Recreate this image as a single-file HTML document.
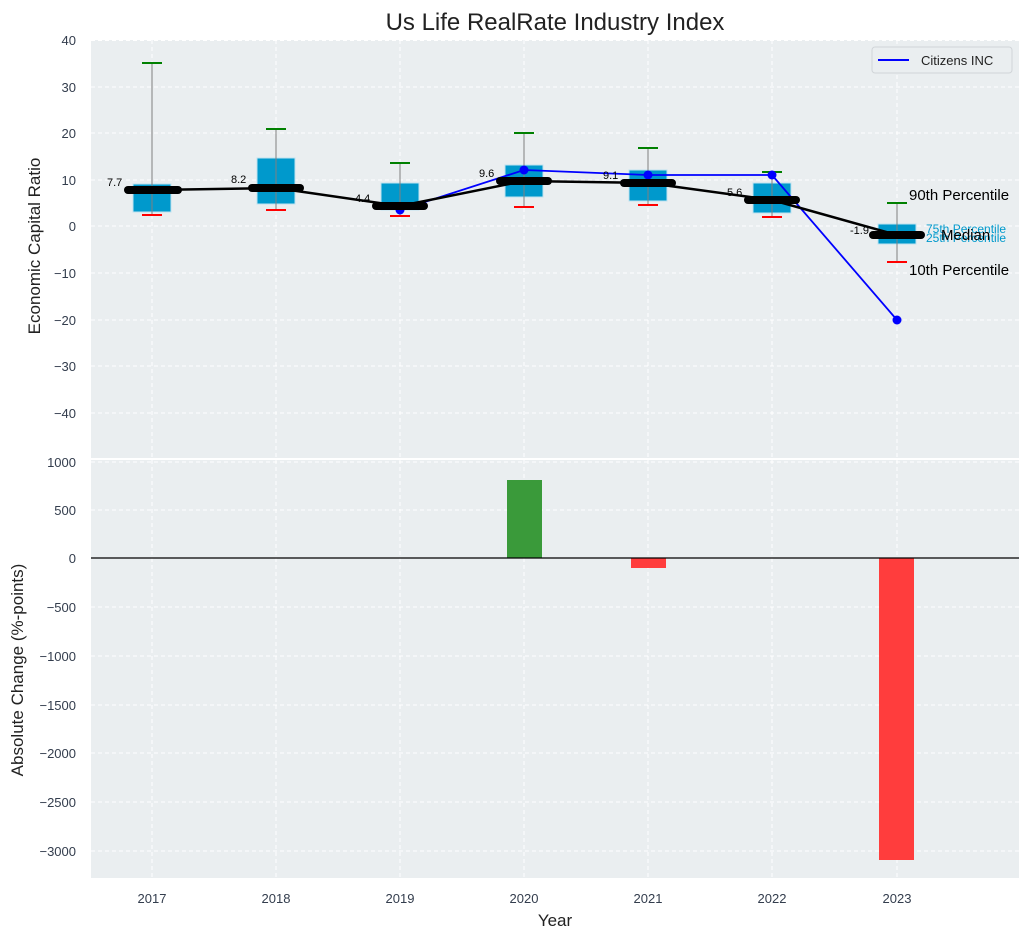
<!DOCTYPE html>
<html><head><meta charset="utf-8"><style>
html,body{margin:0;padding:0;background:#fff;}
svg{display:block;font-family:"Liberation Sans","DejaVu Sans",sans-serif;}
</style></head><body>
<svg width="1030" height="940" viewBox="0 0 1030 940" xmlns="http://www.w3.org/2000/svg">
<rect width="1030" height="940" fill="#fff"/>
<!-- top axes -->
<rect x="91" y="40" width="928" height="418" fill="#eaeef0"/>
<!-- bottom axes -->
<rect x="91" y="460" width="928" height="418" fill="#eaeef0"/>
<g stroke="#fff" stroke-width="1" stroke-dasharray="4,3">
 <line x1="91" x2="1019" y1="40.5" y2="40.5"/><line x1="91" x2="1019" y1="87" y2="87"/>
 <line x1="91" x2="1019" y1="133" y2="133"/><line x1="91" x2="1019" y1="180" y2="180"/>
 <line x1="91" x2="1019" y1="226" y2="226"/><line x1="91" x2="1019" y1="273" y2="273"/>
 <line x1="91" x2="1019" y1="320" y2="320"/><line x1="91" x2="1019" y1="366" y2="366"/>
 <line x1="91" x2="1019" y1="413" y2="413"/>
 <line x1="91" x2="1019" y1="462" y2="462"/><line x1="91" x2="1019" y1="510" y2="510"/>
 <line x1="91" x2="1019" y1="607" y2="607"/><line x1="91" x2="1019" y1="656" y2="656"/>
 <line x1="91" x2="1019" y1="705" y2="705"/><line x1="91" x2="1019" y1="753" y2="753"/>
 <line x1="91" x2="1019" y1="802" y2="802"/><line x1="91" x2="1019" y1="851" y2="851"/>
 <g>
 <line x1="152" x2="152" y1="40" y2="878"/><line x1="276" x2="276" y1="40" y2="878"/>
 <line x1="400" x2="400" y1="40" y2="878"/><line x1="524" x2="524" y1="40" y2="878"/>
 <line x1="648" x2="648" y1="40" y2="878"/><line x1="772" x2="772" y1="40" y2="878"/>
 <line x1="897" x2="897" y1="40" y2="878"/>
 </g>
</g>
<line x1="91" x2="1019" y1="459" y2="459" stroke="#fff" stroke-width="2"/>
<!-- boxes -->
<g fill="#0099cc" stroke="#bfe3f0" stroke-width="1">
 <rect x="133" y="184" width="38" height="28"/>
 <rect x="257" y="158" width="38" height="46"/>
 <rect x="381" y="183" width="38" height="27"/>
 <rect x="505" y="165" width="38" height="32"/>
 <rect x="629" y="170" width="38" height="31"/>
 <rect x="753" y="183" width="38" height="30"/>
 <rect x="878" y="224" width="38" height="20"/>
</g>
<g stroke="#808080" stroke-width="1">
 <line x1="152" x2="152" y1="63" y2="215"/><line x1="276" x2="276" y1="129" y2="210"/>
 <line x1="400" x2="400" y1="163" y2="216"/><line x1="524" x2="524" y1="133" y2="207"/>
 <line x1="648" x2="648" y1="148" y2="205"/><line x1="772" x2="772" y1="172" y2="217"/>
 <line x1="897" x2="897" y1="203" y2="262"/>
</g>
<g stroke="green" stroke-width="2">
 <line x1="142" x2="162" y1="63" y2="63"/><line x1="266" x2="286" y1="129" y2="129"/>
 <line x1="390" x2="410" y1="163" y2="163"/><line x1="514" x2="534" y1="133" y2="133"/>
 <line x1="638" x2="658" y1="148" y2="148"/><line x1="762" x2="782" y1="172" y2="172"/>
 <line x1="887" x2="907" y1="203" y2="203"/>
</g>
<g stroke="red" stroke-width="2">
 <line x1="142" x2="162" y1="215" y2="215"/><line x1="266" x2="286" y1="210" y2="210"/>
 <line x1="390" x2="410" y1="216" y2="216"/><line x1="514" x2="534" y1="207" y2="207"/>
 <line x1="638" x2="658" y1="205" y2="205"/><line x1="762" x2="782" y1="217" y2="217"/>
 <line x1="887" x2="907" y1="262" y2="262"/>
</g>
<!-- blue line -->
<polyline points="400,210 524,170 648,175 772,175 897,320" fill="none" stroke="#0000ff" stroke-width="1.8"/>
<g fill="#0000ff"><circle cx="400" cy="210" r="4.5"/><circle cx="524" cy="170" r="4.5"/><circle cx="648" cy="175" r="4.5"/><circle cx="772" cy="175" r="4.5"/><circle cx="897" cy="320" r="4.5"/></g>
<!-- median line -->
<polyline points="152,190 276,188 400,206 524,181 648,183 772,200 897,235" fill="none" stroke="#000" stroke-width="2.5"/>
<g stroke="#000" stroke-width="8" stroke-linecap="round">
 <line x1="128" x2="178" y1="190" y2="190"/><line x1="252" x2="300" y1="188" y2="188"/>
 <line x1="376" x2="424" y1="206" y2="206"/><line x1="500" x2="548" y1="181" y2="181"/>
 <line x1="624" x2="672" y1="183" y2="183"/><line x1="748" x2="796" y1="200" y2="200"/>
 <line x1="873" x2="921" y1="235" y2="235"/>
</g>
<g font-size="11" fill="#000">
 <text x="107" y="186">7.7</text><text x="231" y="183">8.2</text><text x="355" y="202">4.4</text>
 <text x="479" y="177">9.6</text><text x="603" y="179">9.1</text><text x="727" y="196">5.6</text>
 <text x="850" y="234">-1.9</text>
</g>
<text x="909" y="200" font-size="15" fill="#000">90th Percentile</text>
<text x="909" y="275" font-size="15" fill="#000">10th Percentile</text>
<text x="926" y="233" font-size="12" fill="#0099cc">75th Percentile</text>
<text x="926" y="242" font-size="12" fill="#0099cc">25th Percentile</text>
<text x="941" y="240" font-size="15" fill="#000">Median</text>
<!-- legend -->
<rect x="872" y="47" width="140" height="26" rx="3" fill="#eaeef0" stroke="#d0d4d8"/>
<line x1="878" x2="909" y1="60" y2="60" stroke="#0000ff" stroke-width="2"/>
<text x="921" y="65" font-size="13" fill="#222">Citizens INC</text>
<!-- bars -->
<rect x="507" y="480" width="35" height="78" fill="#3a9a3a"/>
<rect x="631" y="558" width="35" height="10" fill="#ff3d3d"/>
<rect x="879" y="558" width="35" height="302" fill="#ff3d3d"/>
<line x1="91" x2="1019" y1="558" y2="558" stroke="#000" stroke-width="1.3"/>
<!-- tick labels -->
<g font-size="13" fill="#333d4d" text-anchor="end">
 <text x="76" y="45">40</text><text x="76" y="92">30</text><text x="76" y="138">20</text>
 <text x="76" y="185">10</text><text x="76" y="231">0</text><text x="76" y="278">−10</text>
 <text x="76" y="325">−20</text><text x="76" y="371">−30</text><text x="76" y="418">−40</text>
 <text x="76" y="467">1000</text><text x="76" y="515">500</text><text x="76" y="563">0</text>
 <text x="76" y="612">−500</text><text x="76" y="661">−1000</text><text x="76" y="710">−1500</text>
 <text x="76" y="758">−2000</text><text x="76" y="807">−2500</text><text x="76" y="856">−3000</text>
</g>
<g font-size="13" fill="#333d4d" text-anchor="middle">
 <text x="152" y="903">2017</text><text x="276" y="903">2018</text><text x="400" y="903">2019</text>
 <text x="524" y="903">2020</text><text x="648" y="903">2021</text><text x="772" y="903">2022</text>
 <text x="897" y="903">2023</text>
</g>
<text x="555" y="926" font-size="17" fill="#222" text-anchor="middle">Year</text>
<text transform="translate(40,246) rotate(-90)" font-size="17" fill="#222" text-anchor="middle">Economic Capital Ratio</text>
<text transform="translate(23,670) rotate(-90)" font-size="17" fill="#222" text-anchor="middle">Absolute Change (%-points)</text>
<text x="555" y="30" font-size="24" fill="#222" text-anchor="middle">Us Life RealRate Industry Index</text>
</svg>
</body></html>
